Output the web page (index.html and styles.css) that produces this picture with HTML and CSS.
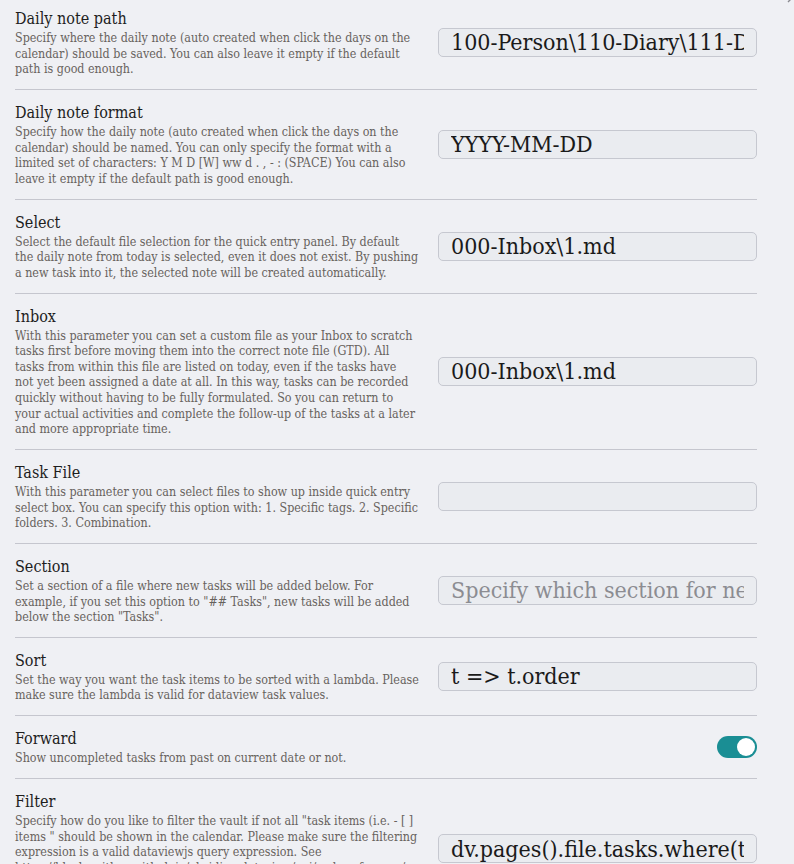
FILE: index.html
```html
<!DOCTYPE html>
<html>
<head>
<meta charset="utf-8">
<link rel="stylesheet" href="styles.css">
</head>
<body>
<div class="modal">
  <button class="close" aria-label="Close">
    <svg width="12" height="12" viewBox="0 0 12 12"><path d="M1 1L11 11M11 1L1 11" stroke="#8a8a90" stroke-width="1.4" fill="none"/></svg>
  </button>
  <div class="settings">
    <div class="setting">
      <div class="info">
        <div class="name">Daily note path</div>
        <div class="desc">Specify where the daily note (auto created when click the days on the<br>calendar) should be saved. You can also leave it empty if the default<br>path is good enough.</div>
      </div>
      <div class="control"><input class="text" type="text" value="100-Person\110-Diary\111-Daily"></div>
    </div>
    <div class="setting">
      <div class="info">
        <div class="name">Daily note format</div>
        <div class="desc">Specify how the daily note (auto created when click the days on the<br>calendar) should be named. You can only specify the format with a<br>limited set of characters: Y M D [W] ww d . , - : (SPACE) You can also<br>leave it empty if the default path is good enough.</div>
      </div>
      <div class="control"><input class="text" type="text" value="YYYY-MM-DD"></div>
    </div>
    <div class="setting">
      <div class="info">
        <div class="name">Select</div>
        <div class="desc">Select the default file selection for the quick entry panel. By default<br>the daily note from today is selected, even it does not exist. By pushing<br>a new task into it, the selected note will be created automatically.</div>
      </div>
      <div class="control"><input class="text" type="text" value="000-Inbox\1.md"></div>
    </div>
    <div class="setting">
      <div class="info">
        <div class="name">Inbox</div>
        <div class="desc">With this parameter you can set a custom file as your Inbox to scratch<br>tasks first before moving them into the correct note file (GTD). All<br>tasks from within this file are listed on today, even if the tasks have<br>not yet been assigned a date at all. In this way, tasks can be recorded<br>quickly without having to be fully formulated. So you can return to<br>your actual activities and complete the follow-up of the tasks at a later<br>and more appropriate time.</div>
      </div>
      <div class="control"><input class="text" type="text" value="000-Inbox\1.md"></div>
    </div>
    <div class="setting">
      <div class="info">
        <div class="name">Task File</div>
        <div class="desc">With this parameter you can select files to show up inside quick entry<br>select box. You can specify this option with: 1. Specific tags. 2. Specific<br>folders. 3. Combination.</div>
      </div>
      <div class="control"><input class="text" type="text" value=""></div>
    </div>
    <div class="setting">
      <div class="info">
        <div class="name">Section</div>
        <div class="desc">Set a section of a file where new tasks will be added below. For<br>example, if you set this option to "## Tasks", new tasks will be added<br>below the section "Tasks".</div>
      </div>
      <div class="control"><input class="text" type="text" placeholder="Specify which section for new tasks"></div>
    </div>
    <div class="setting">
      <div class="info">
        <div class="name">Sort</div>
        <div class="desc">Set the way you want the task items to be sorted with a lambda. Please<br>make sure the lambda is valid for dataview task values.</div>
      </div>
      <div class="control"><input class="text" type="text" value="t =&gt; t.order"></div>
    </div>
    <div class="setting">
      <div class="info">
        <div class="name">Forward</div>
        <div class="desc">Show uncompleted tasks from past on current date or not.</div>
      </div>
      <div class="control"><div class="toggle on"><span class="knob"></span></div></div>
    </div>
    <div class="setting">
      <div class="info">
        <div class="name">Filter</div>
        <div class="desc">Specify how do you like to filter the vault if not all "task items (i.e. - [ ]<br>items " should be shown in the calendar. Please make sure the filtering<br>expression is a valid dataviewjs query expression. See<br>https://blacksmithgu.github.io/obsidian-dataview/api/code-reference/<br>for more information. By default, all task items of the vault<br>will be shown in the calendar.</div>
      </div>
      <div class="control"><input class="text" type="text" value="dv.pages().file.tasks.where(t =&gt; !t.completed)"></div>
    </div>
  </div>
</div>
</body>
</html>
```

FILE: styles.css
```css
html, body {
  margin: 0;
  padding: 0;
  background: #eff0f4;
  height: 100%;
  overflow: hidden;
}
.modal {
  position: relative;
  padding: 0 37px 0 15px;
  font-family: "DejaVu Serif Condensed", "DejaVu Serif", serif;
}
.close {
  position: absolute;
  top: -5px;
  right: -6px;
  border: 0;
  background: none;
  padding: 0;
  width: 14px;
  height: 14px;
}
.settings {
  margin-top: -4px;
}
.setting {
  display: flex;
  align-items: center;
  gap: 15px;
  padding: 12.1px 0;
  border-top: 1px solid #c5c6ce;
}
.setting:first-child {
  border-top: 0;
}
.info {
  flex: 1;
  min-width: 0;
}
.name {
  font-size: 16px;
  line-height: 22px;
  color: #1e1e1e;
}
.desc {
  font-size: 12.4px;
  line-height: 15.6px;
  color: #67625d;
  white-space: nowrap;
}
.control {
  width: 319px;
  display: flex;
  justify-content: flex-end;
  flex-shrink: 0;
}
.text {
  width: 100%;
  box-sizing: border-box;
  height: 29px;
  padding: 0 12px;
  border: 1px solid #c6c8d0;
  border-radius: 5px;
  background: #eaecf0;
  font-family: "DejaVu Serif Condensed", "DejaVu Serif", serif;
  font-size: 23px;
  color: #1a1a1a;
  outline: none;
}
.text::placeholder {
  color: #8c8c92;
}
.toggle {
  width: 40px;
  height: 22px;
  border-radius: 11px;
  background: #1a8e94;
  box-sizing: border-box;
  padding: 2px;
  display: flex;
  justify-content: flex-end;
}
.knob {
  width: 18px;
  height: 18px;
  border-radius: 50%;
  background: #ffffff;
}
```
